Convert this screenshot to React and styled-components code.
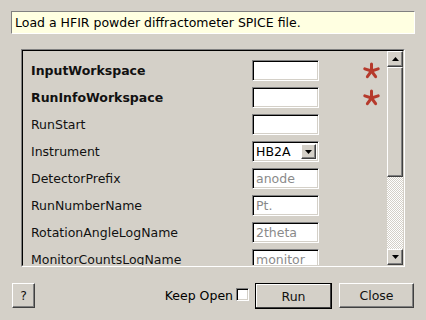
import styled, { createGlobalStyle } from "styled-components";

const GlobalStyle = createGlobalStyle`
  html, body {
    margin: 0;
    background: #d4d0c8;
  }
  body {
    font-family: "DejaVu Sans", sans-serif;
    font-size: 12.5px;
    color: #000;
  }
`;

const rows = [
  { name: "InputWorkspace", bold: true, kind: "text", required: true },
  { name: "RunInfoWorkspace", bold: true, kind: "text", required: true },
  { name: "RunStart", kind: "text" },
  { name: "Instrument", kind: "combo", value: "HB2A" },
  { name: "DetectorPrefix", kind: "text", hint: "anode" },
  { name: "RunNumberName", kind: "text", hint: "Pt." },
  { name: "RotationAngleLogName", kind: "text", hint: "2theta" },
  { name: "MonitorCountsLogName", kind: "text", hint: "monitor" },
];

const Star = () => (
  <svg width="17" height="17" viewBox="0 0 17 17">
    <g stroke="#b63a2c" strokeWidth="3" strokeLinecap="round">
      {[0, 72, 144, 216, 288].map((a) => (
        <line key={a} x1="8.5" y1="9" x2="8.5" y2="2" transform={`rotate(${a} 8.5 9)`} />
      ))}
    </g>
  </svg>
);

const Arrow = ({ up }) => (
  <svg width="7" height="4" viewBox="0 0 7 4">
    <path d={up ? "M0 4 L3.5 0 L7 4 Z" : "M0 0 L7 0 L3.5 4 Z"} fill="#000" />
  </svg>
);

export default function App() {
  return (
    <Dialog>
      <GlobalStyle />
      <Description>Load a HFIR powder diffractometer SPICE file.</Description>
      <Frame>
        <Inner>
          <Viewport>
            <PropGrid>
              {rows.map((r) => (
                <Row key={r.name}>
                  <Label $bold={r.bold}>{r.name}</Label>
                  {r.kind === "combo" ? (
                    <Combo>
                      <span>{r.value}</span>
                      <ComboButton>
                        <Arrow />
                      </ComboButton>
                    </Combo>
                  ) : (
                    <TextBox $muted={!!r.hint}>{r.hint}</TextBox>
                  )}
                  <Validator>{r.required && <Star />}</Validator>
                </Row>
              ))}
            </PropGrid>
          </Viewport>
          <ScrollBar>
            <ArrowButton>
              <Arrow up />
            </ArrowButton>
            <Handle />
            <Track />
            <ArrowButton>
              <Arrow />
            </ArrowButton>
          </ScrollBar>
        </Inner>
      </Frame>
      <Footer>
        <Button $w={23}>?</Button>
        <Spacer />
        <KeepOpen>Keep Open</KeepOpen>
        <CheckBox />
        <Button $w={77} $h={26} $default>
          Run
        </Button>
        <Button $w={75}>Close</Button>
      </Footer>
    </Dialog>
  );
}

const Dialog = styled.div`
  width: 426px;
  height: 320px;
  box-sizing: border-box;
  padding: 11px;
  display: flex;
  flex-direction: column;
  overflow: hidden;
`;

const Description = styled.div`
  height: 23px;
  box-sizing: border-box;
  background: #ffffe1;
  border-top: 1px solid #808080;
  border-left: 1px solid #808080;
  border-right: 1px solid #fff;
  border-bottom: 1px solid #fff;
  padding: 0 3px;
  line-height: 21px;
  white-space: nowrap;
`;

const Frame = styled.div`
  margin: 15px 10px 0;
  height: 218px;
  box-sizing: border-box;
  border-top: 1px solid #808080;
  border-left: 1px solid #808080;
  border-right: 1px solid #fff;
  border-bottom: 1px solid #fff;
`;

const Inner = styled.div`
  height: 100%;
  box-sizing: border-box;
  border-top: 1px solid #000;
  border-left: 1px solid #000;
  border-right: 1px solid #d4d0c8;
  border-bottom: 1px solid #d4d0c8;
  display: flex;
`;

const Viewport = styled.div`
  flex: 1;
  overflow: hidden;
  padding: 9px 0 0 8px;
`;

const PropGrid = styled.div`
  display: grid;
  grid-auto-rows: 21px;
  row-gap: 6px;
`;

const Row = styled.div`
  display: grid;
  grid-template-columns: 221px 67px 1fr;
  align-items: center;
`;

const Label = styled.div`
  font-weight: ${(p) => (p.$bold ? "bold" : "normal")};
  color: #111;
  white-space: nowrap;
`;

const Sunken = styled.div`
  height: 21px;
  box-sizing: border-box;
  background: #fff;
  border-top: 1px solid #808080;
  border-left: 1px solid #808080;
  border-right: 1px solid #fff;
  border-bottom: 1px solid #fff;
  box-shadow: inset 1px 1px 0 #000, inset -1px -1px 0 #d4d0c8;
`;

const TextBox = styled(Sunken)`
  padding: 0 2px 0 3px;
  line-height: 19px;
  color: ${(p) => (p.$muted ? "#8a8a8a" : "#000")};
  overflow: hidden;
  white-space: nowrap;
`;

const Combo = styled(Sunken)`
  display: flex;
  align-items: center;
  padding: 2px 2px 2px 3px;

  span {
    flex: 1;
  }
`;

const Raised = styled.div`
  box-sizing: border-box;
  background: #d4d0c8;
  border-top: 1px solid #fff;
  border-left: 1px solid #fff;
  border-right: 1px solid #404040;
  border-bottom: 1px solid #404040;
  box-shadow: inset -1px -1px 0 #808080;
`;

const ComboButton = styled(Raised)`
  width: 15px;
  height: 15px;
  display: flex;
  align-items: center;
  justify-content: center;
`;

const Validator = styled.div`
  padding-left: 44px;
  display: flex;
  align-items: center;
`;

const ScrollBar = styled.div`
  width: 16px;
  display: flex;
  flex-direction: column;
`;

const ArrowButton = styled(Raised)`
  height: 16px;
  flex: none;
  display: flex;
  align-items: center;
  justify-content: center;
`;

const Handle = styled(Raised)`
  height: 110px;
  flex: none;
`;

const Track = styled.div`
  flex: 1;
  background: repeating-conic-gradient(#fff 0 25%, #d4d0c8 0 50%) 0 0 / 2px 2px;
`;

const Footer = styled.div`
  margin-top: 16px;
  padding: 0 1px;
  display: flex;
  align-items: flex-start;
  gap: 7px;
`;

const Spacer = styled.div`
  flex: 1;
`;

const Button = styled(Raised)`
  width: ${(p) => p.$w}px;
  height: ${(p) => p.$h || 25}px;
  display: flex;
  align-items: center;
  justify-content: center;
  color: #111;
  ${(p) =>
    p.$default &&
    `
    outline: 1px solid #000;
    outline-offset: -1px;
    border-right-color: #000;
    border-bottom-color: #000;
    box-shadow: inset -1px -1px 0 #404040, inset 1px 1px 0 #fff;
  `}
`;

const KeepOpen = styled.span`
  line-height: 25px;
  margin-right: -4px;
`;

const CheckBox = styled(Sunken)`
  width: 13px;
  height: 13px;
  margin-top: 5px;
  margin-right: -1px;
`;
